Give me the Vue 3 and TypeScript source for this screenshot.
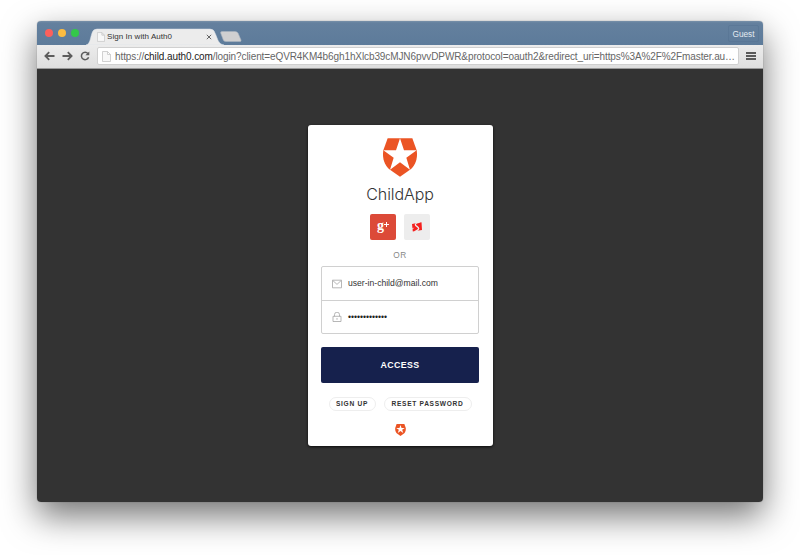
<script setup lang="ts">
import { ref } from 'vue'

const email = ref<string>('user-in-child@mail.com')
const passwordLength = 13
const dots: string = '•'.repeat(passwordLength)
</script>

<template>
  <div class="desktop">
    <main class="window">
      <header class="titlebar">
        <div class="lights"><i class="red"></i><i class="yellow"></i><i class="green"></i></div>
        <div class="tab">
          <svg class="tab-shape" viewBox="0 0 138 17">
            <path d="M0 17C4 16 4 11 6 5Q7 1 11 1H124Q128 1 129 5C132 11 132 16 138 17Z" fill="#ececec" stroke="#d9e1e9" stroke-width=".5" />
          </svg>
          <div class="tab-content">
            <svg class="page" viewBox="0 0 9 11"><path d="M.5.5H5.5L8.5 3.5V10.5H.5ZM5.5.5V3.5H8.5" fill="#f8f8f8" stroke="#c5c5c5" stroke-width=".8" /></svg>
            <span class="tab-title">Sign In with Auth0</span>
            <svg class="close" viewBox="0 0 6 6"><path d="M.8.8 5.2 5.2M5.2.8.8 5.2" stroke="#666" stroke-width="1" /></svg>
          </div>
        </div>
        <svg class="new-tab" viewBox="0 0 22 11"><path d="M2 .5H15Q17 .5 18 2L21 9Q21.5 10.5 20 10.5H6Q4 10.5 3.3 9L.7 2Q.2.5 2 .5Z" fill="#cfcfd0" stroke="#aab4bf" stroke-width=".6" /></svg>
        <span class="guest">Guest</span>
      </header>
      <nav class="toolbar">
        <svg class="arrow" viewBox="0 0 11 10"><path d="M10.5 5H1.4M5.2 1.2 1.4 5 5.2 8.8" /></svg>
        <svg class="arrow" viewBox="0 0 11 10"><path d="M.5 5H9.6M5.8 1.2 9.6 5 5.8 8.8" /></svg>
        <svg class="reload" viewBox="0 0 10 10"><path d="M8 2.6A3.7 3.7 0 1 0 8.6 6.2" fill="none" stroke="#5c5c5c" stroke-width="1.5" /><path d="M9.3.4V4.3H5.4Z" fill="#5c5c5c" /></svg>
        <div class="address">
          <svg class="page" viewBox="0 0 9 11"><path d="M.5.5H5.5L8.5 3.5V10.5H.5ZM5.5.5V3.5H8.5" fill="#f8f8f8" stroke="#c5c5c5" stroke-width=".8" /></svg>
          <span class="url">https://<b>child.auth0.com</b>/login?client=eQVR4KM4b6gh1hXlcb39cMJN6pvvDPWR&amp;protocol=oauth2&amp;redirect_uri=https%3A%2F%2Fmaster.au…</span>
        </div>
        <div class="menu"><i></i><i></i><i></i></div>
      </nav>
      <section class="viewport">
        <form class="card" @submit.prevent>
          <svg class="logo" viewBox="249 55 102 115">
            <path d="M263 55H337L350 91C354 115 346 137 330 149L300 170L270 149C254 137 246 115 250 91Z" fill="#eb5424" />
            <path d="M300 55 312 91H350L319 113 330 149 300 127 270 149 281 113 250 91H288Z" fill="#fff" />
          </svg>
          <h1>ChildApp</h1>
          <div class="social">
            <button type="button" class="google"><span>g</span><svg viewBox="0 0 5 5"><path d="M2.5 0V5M0 2.5H5" stroke="#fff" stroke-width="1" /></svg></button>
            <button type="button" class="custom">
              <svg viewBox="0 0 10 10"><path d="M0 2 9.5.3 10 8 .8 9.6Z" fill="#f5201e" /><path d="M7.6.2C4.8.8 3.2 1.5 3.4 2.8S6.9 4.9 6.7 6.6 4.4 8.6 2.6 9.8" fill="none" stroke="#ededed" stroke-width="1.3" /><path d="M0 7.4 1.6 5.8" stroke="#ededed" stroke-width="1" /></svg>
            </button>
          </div>
          <div class="or">OR</div>
          <div class="fields">
            <div class="field">
              <svg class="icon" viewBox="0 0 10 10"><path d="M.5 1.2H9.5V8.8H.5ZM.8 1.5 5 5.4 9.2 1.5" /></svg>
              <span class="email">{{ email }}</span>
            </div>
            <div class="field">
              <svg class="icon" viewBox="0 0 10 10"><path d="M1 4.3H9V9.5H1ZM2.5 4.3V2.7A2.5 2.5 0 0 1 7.5 2.7V4.3M5 6V7.8" /></svg>
              <span class="dots">{{ dots }}</span>
            </div>
          </div>
          <button type="submit" class="access">ACCESS</button>
          <div class="links">
            <button type="button" class="signup">SIGN UP</button>
            <button type="button" class="reset">RESET PASSWORD</button>
          </div>
          <svg class="badge" viewBox="249 55 102 115">
            <path d="M263 55H337L350 91C354 115 346 137 330 149L300 170L270 149C254 137 246 115 250 91Z" fill="#eb5424" />
            <path d="M300 64 310 93H341L316 111 326 141 300 123 274 141 284 111 259 93H290Z" fill="#fff" />
          </svg>
        </form>
      </section>
    </main>
  </div>
</template>

<style>
body { background: #fff; }
</style>

<style scoped>
* { box-sizing: border-box; }
.desktop {
  height: 555px;
  padding: 21px 37px 53px;
  overflow: hidden;
  font-family: "Liberation Sans", Arial, sans-serif;
}
svg { display: block; flex: none; }
button { font-family: inherit; padding: 0; border: 0; }
.window {
  height: 481px;
  display: flex;
  flex-direction: column;
  border-radius: 4px;
  overflow: hidden;
  box-shadow: 0 14px 34px rgba(0, 0, 0, .55), 0 0 1px rgba(0, 0, 0, .5);
}
.titlebar {
  height: 24px;
  flex: none;
  display: flex;
  align-items: flex-end;
  background: linear-gradient(#7890a9 0, #64809e 2px, #5d7b9a);
}
.lights { display: flex; gap: 5px; padding: 0 0 8px 8px; width: 49px; }
.lights i { width: 8px; height: 8px; border-radius: 50%; flex: none; }
.red { background: #fc605c; }
.yellow { background: #fdbc40; }
.green { background: #34c84a; }
.tab { display: grid; width: 138px; height: 17px; }
.tab > * { grid-area: 1 / 1; }
.tab-shape { width: 138px; height: 17px; }
.tab-content { display: flex; align-items: center; padding: 1px 12px 0 11px; position: relative; }
.tab-content .page { width: 8px; height: 10px; }
.tab-title { margin-left: 2px; font-size: 8px; line-height: 10px; letter-spacing: .06px; color: #333; white-space: nowrap; }
.close { width: 6px; height: 6px; margin-left: auto; }
.new-tab { width: 22px; height: 11px; margin: 0 0 3px -4px; }
.guest {
  width: 31px; height: 17px; margin: 0 4px 3px auto;
  border: 1px solid rgba(80, 108, 139, .35); border-radius: 2px;
  color: #e3eaf1; font-size: 8.3px; line-height: 16px; text-align: center;
}
.toolbar {
  height: 24px;
  flex: none;
  display: flex;
  align-items: center;
  padding: 0 7px 1px;
  background: linear-gradient(#ececec, #dedede);
  border-bottom: 1px solid #999;
}
.arrow { width: 11px; height: 10px; margin-right: 7px; fill: none; stroke: #5c5c5c; stroke-width: 1.8; }
.reload { width: 10px; height: 10px; margin-right: 7px; }
.address {
  width: 642px; height: 18px;
  display: flex; align-items: center;
  padding-left: 4px;
  background: #fff;
  border: 1px solid #d0d0d0;
  border-radius: 2px;
}
.address .page { width: 9px; height: 11px; margin-right: 4px; }
.url { padding-top: 1px; font-size: 10px; line-height: 15px; letter-spacing: -.1px; color: #666; white-space: nowrap; }
.url b { font-weight: 400; color: #222; }
.menu { display: flex; flex-direction: column; gap: 1px; width: 10px; margin-left: 7px; }
.menu i { height: 2px; background: #5a5a5a; }
.viewport {
  flex: 1;
  display: flex;
  justify-content: center;
  align-items: flex-start;
  padding-top: 56px;
  background: #333;
}
.card {
  width: 185px; height: 321px;
  display: flex;
  flex-direction: column;
  align-items: center;
  padding: 13px 13px 0;
  background: #fff;
  border-radius: 3px;
  box-shadow: 0 1px 3px rgba(0, 0, 0, .8);
}
.logo { width: 34px; height: 39px; }
h1 { margin: 7px 0 10px; font-family: Inter, sans-serif; font-weight: 300; font-size: 16px; line-height: 20px; color: #333; letter-spacing: -.1px; white-space: nowrap; }
.social { display: flex; gap: 8px; height: 26px; }
.social button { width: 26px; height: 26px; border-radius: 2px; display: flex; align-items: center; justify-content: center; }
.google { background: #dc4a38; color: #fff; font-family: "Liberation Serif", serif; font-size: 14px; font-weight: 700; line-height: 14px; }
.google span { margin-top: -3px; }
.google svg { width: 5px; height: 5px; margin-top: -5px; }
.custom { background: #ededed; }
.custom svg { width: 10px; height: 10px; }
.or { margin-top: 9px; font-size: 8.3px; line-height: 12px; letter-spacing: .6px; color: #888; }
.fields { width: 158px; height: 68px; margin-top: 5px; border: 1px solid #d0d0d0; border-radius: 2px; }
.field { height: 33px; display: flex; align-items: center; padding-left: 10px; gap: 6px; }
.field + .field { border-top: 1px solid #d0d0d0; }
.icon { width: 10px; height: 10px; fill: none; stroke: #a5a5a5; stroke-width: .8; }
.email { font-size: 8.6px; line-height: 12px; color: #333; padding-bottom: 1px; }
.dots { font-size: 8.6px; line-height: 12px; color: #222; }
.access {
  width: 158px; height: 36px; margin-top: 13px;
  background: #16214d; border-radius: 2px;
  color: #fff; font-size: 8.8px; font-weight: 700; letter-spacing: .4px;
}
.links { display: flex; gap: 8px; margin-top: 14px; }
.links button { height: 14px; border: 1px solid #eee; border-radius: 7px; background: #fff; color: #333; font-size: 6.6px; font-weight: 700; line-height: 12px; letter-spacing: .7px; white-space: nowrap; }
.links .signup { width: 47px; }
.links .reset { width: 88px; }
.badge { width: 11px; height: 12px; margin-top: 13px; }
</style>
